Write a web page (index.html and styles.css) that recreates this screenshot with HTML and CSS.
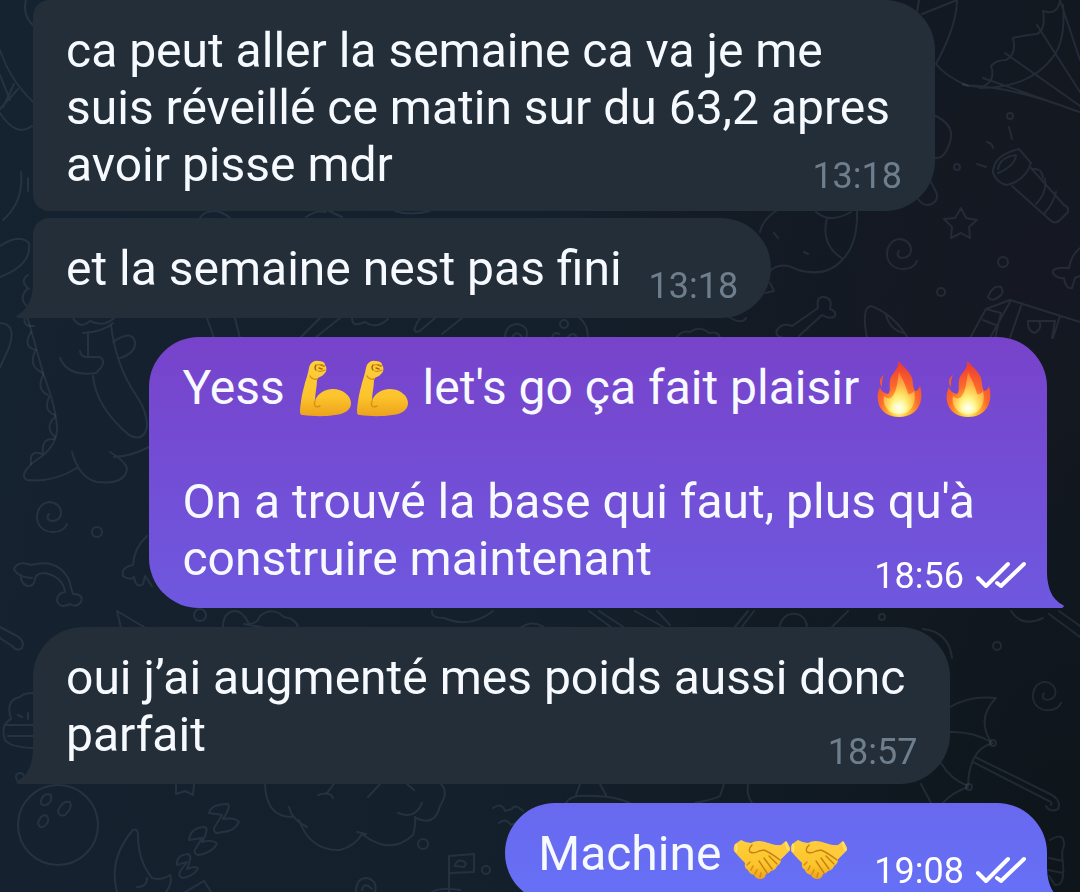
FILE: index.html
```html
<!DOCTYPE html>
<html lang="fr">
<head>
    <meta charset="UTF-8">
    <meta name="viewport" content="width=device-width, initial-scale=1.0">
    <title>Discussion</title>
    <link rel="stylesheet" href="styles.css">
</head>
<body>
    <!-- Shared icons -->
    <svg class="sprite" aria-hidden="true">
        <defs>
            <linearGradient id="skin" x1="0" y1="0" x2="0" y2="1">
                <stop offset="0" stop-color="#fdcf3c"/>
                <stop offset="0.65" stop-color="#fcc42c"/>
                <stop offset="1" stop-color="#eda21c"/>
            </linearGradient>
            <radialGradient id="flame" cx="0.5" cy="0.88" r="0.8">
                <stop offset="0" stop-color="#ffe94a"/>
                <stop offset="0.3" stop-color="#ffb02e"/>
                <stop offset="0.55" stop-color="#fb6a2c"/>
                <stop offset="1" stop-color="#ee4030"/>
            </radialGradient>
            <radialGradient id="core" cx="0.5" cy="0.85" r="0.8">
                <stop offset="0" stop-color="#fffef0"/>
                <stop offset="0.3" stop-color="#fff27a"/>
                <stop offset="0.6" stop-color="#ffc04a"/>
                <stop offset="1" stop-color="#fb7a3c"/>
            </radialGradient>
            <radialGradient id="glow">
                <stop offset="0" stop-color="#fffff4"/>
                <stop offset="0.4" stop-color="#fffbc8"/>
                <stop offset="1" stop-color="#fff27a" stop-opacity="0"/>
            </radialGradient>
        </defs>
        <symbol id="arm" viewBox="0 0 57 57">
            <path d="M12 8C13 3 17 0 21 1C25 1 28 2 28 5C30 7 30 12 27 14C25 17 20 17 20 20C20 27 18 33 18 41C20 34 27 29 36 29C46 29 54 36 54 43C54 50 48 54 38 55C26 57 14 56 6 55C3 55 3 53 3 50C4 40 5 34 7 27C8 21 11 15 12 8Z" fill="url(#skin)"/>
            <path d="M18 41C16 46 19 48 23 46M20 19C17 20 14 18 13 16" fill="none" stroke="#de8f16" stroke-width="1.4" stroke-linecap="round"/>
            <path d="M19 5Q17 8 19 10M22 8L25 9M24 5L27 6" fill="none" stroke="#a8650c" stroke-width="1.4" stroke-linecap="round"/>
            <path d="M20 5Q24 4 27 6M21 11Q24 12 28 10" fill="none" stroke="#d08b14" stroke-width="1.2" stroke-linecap="round"/>
        </symbol>
        <symbol id="fire" viewBox="0 0 57 57">
            <path d="M27 1C31 5 36 9 39 14C43 19 41 26 44 31C47 31 48 28 49 26C51 32 51 40 48 46C44 54 36 57 28 57C19 57 11 53 8 45C6 39 6 33 9 27C10 31 13 33 17 34C20 31 18 26 19 20C20 13 29 9 27 1Z" fill="url(#flame)"/>
            <path d="M13 15C8 18 8 24 11 27C11 22 11 19 13 15Z" fill="#f15a35"/>
            <path d="M28 12C32 20 35 26 37 34C39 35 42 33 43 31C45 38 43 46 39 50C35 55 21 55 17 50C13 45 12 41 13 36C16 39 19 39 21 37C26 31 26 24 28 12Z" fill="url(#core)"/>
            <ellipse cx="28" cy="48" rx="11" ry="10" fill="url(#glow)"/>
        </symbol>
        <symbol id="hands" viewBox="0 0 57 57">
            <path d="M2 18L8 14Q13 17 18 17Q25 13 35 17Q42 20 48 19L53 15Q57 20 57 24L48 33Q48 38 44 40Q43 44 38 45Q36 48 33 48Q32 53 27 53Q23 53 21 49Q16 48 15 44Q11 42 12 37Q5 30 1 25Q0 21 2 18Z" fill="url(#skin)"/>
            <path d="M35 17Q43 20 49 19L53 15Q57 20 57 24L48 33L30 24L20 28Q16 27 18 23Q22 17 28 16Z" fill="#ffcb3d"/>
            <path d="M19 19Q15 23 17 26Q21 28 26 25L31 24Q38 27 47 34M36 30L44 38M31 32L39 43M26 35L34 47" fill="none" stroke="#c98013" stroke-width="1.4" stroke-linecap="round"/>
            <path d="M14 39L17 36M18 44L20 40M22 48L24 44M27 51L28 47" fill="none" stroke="#d68d14" stroke-width="1.6" stroke-linecap="round"/>
            <path d="M3 18Q4 22 3 26M53 16Q53 21 56 24" fill="none" stroke="#ffdf70" stroke-width="2"/>
        </symbol>
        <symbol id="read" viewBox="0 0 52 30">
            <path d="M3 17L11 25L33 3M22 22L26 25L49 3" fill="none" stroke="currentColor" stroke-width="4" stroke-linecap="round" stroke-linejoin="round"/>
        </symbol>
        <symbol id="spiral" viewBox="0 0 36 36">
            <path d="M15 14C12 17 14 21 18 21C23 21 27 18 27 13C27 6 21 2 15 2C7 3 3 10 3 17C3 26 10 32 19 32C26 32 31 29 33 24"/>
        </symbol>
        <symbol id="tail" viewBox="0 0 17 34">
            <path d="M17 0Q16 24 1 31Q-1 33 2 34H17Z" fill="currentColor"/>
        </symbol>
    </svg>

    <!-- Wallpaper doodles -->
    <svg class="wallpaper" viewBox="0 0 1080 892" preserveAspectRatio="xMidYMid slice" aria-hidden="true">
        <!-- bat wing -->
        <path d="M1060 0Q1058 16 1043 11Q1046 30 1037 34Q1025 35 1013 38Q1017 54 1006 60Q996 60 991 66Q996 80 984 86Q974 88 963 84M963 85Q1010 86 1076 111M983 78L1080 112M1005 53L1080 106M1037 25L1080 92M1060 0L1080 60M1063 5Q1066 40 1053 57Q1030 88 980 88"/>
        <path d="M919 0L917 12M922 14L957 0Q957 25 936 64Q945 76 968 86"/>
        <path d="M934 115Q953 124 951 138Q946 160 934 158M931 182L937 194Q938 203 928 205Q922 205 918 199"/>
        <!-- torch -->
        <path d="M993 173Q993 155 1019 149L1031 163Q1025 181 1007 185Q998 184 993 173ZM998 169Q1000 157 1016 155Q1015 166 998 173M1012 186L1050 220Q1055 225 1060 220L1068 212Q1069 207 1064 205L1031 168M1045 179Q1047 193 1036 204M1056 192Q1053 204 1044 214M1033 169Q1042 168 1043 178M1009 127L1012 139M987 142Q992 143 993 148M977 164L986 167"/>
        <path d="M961 208L966 218L977 220L969 227L970 238L961 233L951 238L952 227L944 219L955 218Z"/>
        <path d="M1080 248Q1071 255 1069 268Q1051 267 1053 273Q1057 279 1064 278Q1066 290 1072 288L1075 278L1080 276"/>
        <!-- boxes and leaf -->
        <path d="M970 338L986 309L1010 300L1080 322M986 309L1001 313L995 338M983 320L998 326M1010 302L990 338M1022 303L1010 338M1028 321H1055L1052 338M1060 316L1053 338M1028 321Q1027 331 1035 333Q1043 328 1039 321M988 297Q993 284 1001 287Q1006 294 995 299Q991 301 988 297"/>
        <path d="M867 338Q861 307 871 306Q893 314 908 338M886 315Q890 330 904 333"/>
        <path d="M785 338Q774 337 777 330Q782 322 792 326L818 308Q816 296 824 297Q833 298 830 309Q838 312 834 317Q828 319 822 315L799 336"/>
        <!-- hidden pup -->
        <path d="M760 232Q763 219 776 211M816 212Q830 224 851 212M857 211Q858 243 843 259Q827 278 798 270Q780 260 769 272M827 218Q820 245 843 259M774 233L778 238M804 252L808 254M770 283L774 291L765 293M729 317Q742 325 746 318"/>
        <path d="M578 317Q588 323 588 338M552 338Q553 331 559 334M567 338Q574 330 577 338M676 338Q682 330 690 332Q700 325 709 333Q719 331 720 338"/>
        <path d="M200 218Q204 211 214 211Q222 211 230 218M306 217Q316 210 326 212M329 211L342 217M395 211Q410 216 430 211"/>
        <path d="M207 318L214 338M235 318L240 338M320 318L300 338M340 318L315 338M352 318Q352 328 365 322Q376 330 388 319M420 318Q409 335 420 331L435 318M462 318L442 334M505 338Q505 325 517 324Q530 326 526 338M512 338Q516 329 522 337"/>
        <!-- left strap -->
        <path d="M26 0Q22 16 34 26M0 50Q10 80 33 102M0 75L10 100M14 84L3 107M18 89L0 109M0 113Q16 138 32 126M21 172Q24 202 3 220M28 178V191M0 246Q19 233 29 243Q32 265 0 277"/>
        <!-- dinosaur -->
        <path d="M25 310Q31 329 43 373Q57 410 57 430Q56 448 35 461Q18 475 27 480Q52 483 77 468M72 452Q79 478 97 482Q126 485 127 468Q124 460 110 452M114 457Q132 456 149 447M93 376Q96 407 129 435Q144 443 147 426Q147 411 136 395Q116 366 111 325M60 358Q68 377 96 373Q108 362 100 357H87Q81 357 80 351M73 318Q80 330 90 321Q105 328 115 317M83 333Q103 332 113 323M88 332V355M113 342Q132 329 135 342Q136 353 120 358"/>
        <path d="M28 275Q19 281 29 289M27 289Q18 299 28 307M25 316Q22 327 34 326M31 332Q22 347 36 350M35 351Q28 367 43 373M43 375Q36 390 48 395M49 397Q43 411 55 415M55 417Q44 427 55 437M54 439Q41 438 43 453M42 454Q29 449 31 464M0 323Q18 324 8 350L0 367"/>
        <!-- bones -->
        <path d="M32 578Q17 577 14 569Q18 560 31 565Q58 558 69 580Q71 588 73 594Q84 594 81 602Q76 608 70 604Q60 609 57 601Q57 593 65 592Q63 577 45 573Q36 573 35 579Q34 587 27 586Q20 583 21 575M147 536Q134 548 133 565Q121 567 123 576Q130 581 134 577Q136 589 143 584L145 576L152 586"/>
        <path d="M117 611L121 628M117 611L144 627M223 627Q223 612 235 611Q243 611 249 624Q257 624 260 616Q272 606 284 617Q297 619 298 628M244 624L266 628M432 611Q431 618 444 618Q470 629 493 611M520 628Q533 619 545 628M0 627L17 636Q25 641 22 648Q17 652 12 646L0 638"/>
        <path d="M589 611L612 628M599 611L625 628M635 611L665 628M657 611L670 625M748 611L734 628M754 611L741 628M779 628Q783 612 797 614Q807 617 807 628M848 611L831 628M1011 611Q1022 628 1043 618M1049 614L1080 637M1059 611L1080 626M923 629Q949 632 952 658"/>
        <!-- ball, moon and z z z -->
        <circle cx="58" cy="825" r="40"/>
        <path d="M41 800Q44 792 51 795Q53 802 46 805Q40 806 41 800ZM58 811Q62 800 70 802Q73 808 65 815Q59 817 58 811ZM38 823Q41 813 47 816Q51 822 43 827Q39 828 38 823Z"/>
        <path d="M117 892Q108 859 133 830Q138 828 138 835Q138 861 152 878Q161 881 170 875Q173 882 166 892M137 887Q147 887 147 878M185 892L204 881L211 892"/>
        <path d="M209 813Q211 804 228 804Q231 807 223 819Q235 817 239 822Q234 832 222 832Q213 835 214 828L222 815ZM189 840Q190 828 204 827Q210 827 202 842Q214 839 217 844Q212 853 198 855Q192 853 196 848L202 838ZM177 865Q176 855 188 854Q193 855 187 869Q197 865 198 869Q192 877 182 878Q177 876 181 870L187 862Z"/>
        <path d="M5 740Q0 725 11 719Q5 700 20 697Q23 693 33 693M5 740Q10 747 33 748M7 725H33M8 736H33M18 715L22 717M28 713V719M176 784L176 794L185 791L193 795L194 784"/>
        <!-- cloud -->
        <path d="M265 784Q266 817 292 817M289 807Q292 820 307 827M299 820Q310 851 340 850Q355 846 362 834Q390 856 413 835Q416 825 415 817M357 832L366 834M398 813Q415 820 422 803M416 818Q435 827 440 806Q449 792 441 784M318 795Q330 791 333 798M326 794L334 784M368 797L380 784M407 784L414 790M493 808Q502 802 505 811L512 809Q514 803 523 811M499 823Q505 817 511 825L518 822"/>
        <path d="M449 892V856L474 854V872L449 873M455 866Q456 859 463 861Q468 863 464 867ZM356 892Q356 878 367 878Q378 881 375 892M362 890Q364 881 372 889M432 892Q440 887 460 890"/>
        <path d="M566 803Q570 794 590 796Q612 795 630 803M576 795L580 784M600 784L606 795M695 803Q715 799 720 796L724 784M748 784Q746 795 752 803"/>
        <!-- umbrella -->
        <path d="M950 707Q970 695 996 698Q976 718 991 742Q972 731 950 732M941 763Q950 779 968 786M993 743Q969 749 968 786M921 784L931 803M968 787Q951 793 943 803M975 757L1050 794Q1062 800 1058 809Q1050 813 1046 806M973 762L1047 800Q1053 802 1051 805M1050 840Q1065 831 1064 846Q1061 850 1063 865Q1065 886 1055 885L1049 876M1049 858L1063 861M1048 870L1063 873"/>
        <circle cx="993" cy="743" r="3"/>
        <circle cx="969" cy="787" r="3"/>
        <circle cx="1010" cy="116" r="3"/>
        <circle cx="957" cy="167" r="3"/>
        <circle cx="1003" cy="262" r="5"/>
        <circle cx="941" cy="292" r="4"/>
        <circle cx="564" cy="324" r="4"/>
        <circle cx="97" cy="532" r="5"/>
        <circle cx="200" cy="615" r="6"/>
        <circle cx="20" cy="777" r="4"/>
        <circle cx="882" cy="617" r="3"/>
        <circle cx="997" cy="646" r="4"/>
        <circle cx="423" cy="844" r="5"/>
        <circle cx="486" cy="870" r="4"/>
        <use href="#spiral" x="884" y="237" width="36" height="36"/>
        <use href="#spiral" x="34" y="500" width="36" height="36"/>
        <use href="#spiral" x="1030" y="680" width="34" height="34"/>
    </svg>

    <main class="chat">
        <article class="bubble in first">
            <p class="text">ca peut aller la semaine ca va je me<br>suis réveillé ce matin sur du 63,2 apres<br>avoir pisse mdr</p>
            <div class="meta"><time>13:18</time></div>
        </article>

        <article class="bubble in short joined">
            <p class="text">et la semaine nest pas fini</p>
            <div class="meta"><time>13:18</time></div>
            <svg class="tail" aria-hidden="true"><use href="#tail"/></svg>
        </article>

        <article class="bubble out">
            <p class="text">Yess <svg class="emoji" role="img" aria-label="biceps"><use href="#arm"/></svg><svg class="emoji" role="img" aria-label="biceps"><use href="#arm"/></svg> let's go ça fait plaisir <svg class="emoji" role="img" aria-label="feu"><use href="#fire"/></svg> <svg class="emoji" role="img" aria-label="feu"><use href="#fire"/></svg><br><br>On a trouvé la base qui faut, plus qu'à<br>construire maintenant</p>
            <div class="meta"><time>18:56</time><svg class="read" role="img" aria-label="lu"><use href="#read"/></svg></div>
            <svg class="tail" aria-hidden="true"><use href="#tail"/></svg>
        </article>

        <article class="bubble in">
            <p class="text">oui j’ai augmenté mes poids aussi donc<br>parfait</p>
            <div class="meta"><time>18:57</time></div>
            <svg class="tail" aria-hidden="true"><use href="#tail"/></svg>
        </article>

        <article class="bubble out short last">
            <p class="text">Machine <svg class="emoji" role="img" aria-label="poignée de main"><use href="#hands"/></svg><svg class="emoji" role="img" aria-label="poignée de main"><use href="#hands"/></svg></p>
            <div class="meta"><time>19:08</time><svg class="read" role="img" aria-label="lu"><use href="#read"/></svg></div>
            <svg class="tail" aria-hidden="true"><use href="#tail"/></svg>
        </article>
    </main>
</body>
</html>
```

FILE: styles.css
```css
* {
    margin: 0;
    padding: 0;
    box-sizing: border-box;
}

body {
    font-family: Roboto, "Noto Sans", sans-serif;
    font-size: 48px;
    line-height: 57px;
    color: #f6faff;
    height: 100vh;
    overflow: hidden;
    background:
        radial-gradient(circle at 96% 30%, #151822, transparent 42%),
        linear-gradient(100deg, #15222f 0%, #14202c 50%, #0e161c 95%);
}

.sprite {
    position: absolute;
    width: 0;
    height: 0;
}

.wallpaper {
    position: fixed;
    inset: 0;
    width: 100%;
    height: 100%;
    fill: none;
    stroke: #7d91a8;
    stroke-opacity: 0.16;
    stroke-width: 2;
    stroke-linecap: round;
    stroke-linejoin: round;
}

.chat {
    position: relative;
    display: flex;
    flex-direction: column;
    align-items: flex-start;
    gap: 19px;
    padding: 0 33px;
}

.bubble {
    position: relative;
    display: grid;
    padding: 22px 45px 21px 33px;
    border-radius: 50px;
}

.text,
.meta {
    grid-area: 1 / 1;
}

.meta {
    display: flex;
    align-items: center;
    gap: 11px;
    align-self: end;
    justify-self: end;
    margin: 0 -12px -10px 0;
    font-size: 36px;
    line-height: 42px;
    color: #6e7e8c;
}

.in {
    background: #232e39;
    border-bottom-left-radius: 0;
}

.in .tail {
    left: -17px;
    color: #232e39;
}

.first {
    margin-bottom: -12px;
    padding-bottom: 18px;
    border-top-left-radius: 16px;
    border-bottom-left-radius: 16px;
}

.first .meta {
    margin-bottom: -4px;
}

.joined {
    border-top-left-radius: 16px;
}

.out {
    align-self: flex-end;
    padding-right: 50px;
    background: linear-gradient(#6f2fb6 0%, #7843cb 38%, #6e58df 68%, #6670f6 100%) fixed;
    border-bottom-right-radius: 0;
}

.out .meta {
    margin-right: -30px;
    color: #fff;
}

.out .tail {
    right: -17px;
    color: #6e58df;
    transform: scaleX(-1);
}

.last .tail {
    color: #6670f6;
}

.short {
    display: flex;
    gap: 27px;
}

.tail {
    position: absolute;
    bottom: 0;
    width: 17px;
    height: 34px;
}

.emoji {
    width: 57px;
    height: 57px;
    margin: -6px 0;
    vertical-align: -7px;
}

.read {
    width: 52px;
    height: 30px;
}
```
